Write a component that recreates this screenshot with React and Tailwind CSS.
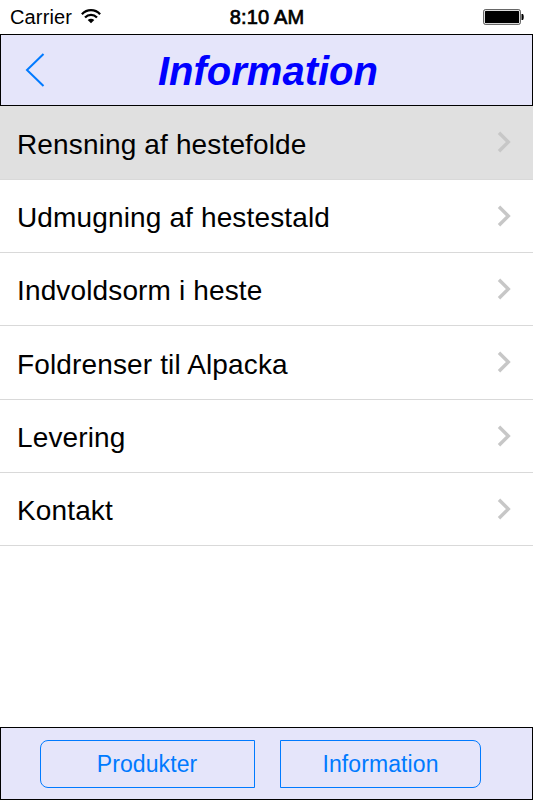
import clsx from 'clsx';

const items = [
  { label: 'Rensning af hestefolde', height: 'h-[74px]', active: true },
  { label: 'Udmugning af hestestald', height: 'h-[73px]' },
  { label: 'Indvoldsorm i heste', height: 'h-[73px]' },
  { label: 'Foldrenser til Alpacka', height: 'h-[74px]' },
  { label: 'Levering', height: 'h-[73px]' },
  { label: 'Kontakt', height: 'h-[73px]' },
];

const StatusBar = () => (
  <div className="h-[34px] shrink-0 grid grid-cols-3 items-center pl-[10px] pr-[9px]">
    <div className="flex items-center gap-[9px]">
      <span className="text-[20px] leading-none tracking-[0.15px]">Carrier</span>
      <svg className="-mt-px" width="20" height="15" viewBox="0 0 20 15" fill="none" stroke="#000" strokeWidth="2.3">
        <path d="M0.9 5.2C6-0.2 14-0.2 19.1 5.2" />
        <path d="M4 8.5C7.5 5 12.5 5 16 8.5" />
        <path d="M10 14.2L6.7 10.9C8.6 9.2 11.4 9.2 13.3 10.9Z" fill="#000" stroke="none" />
      </svg>
    </div>
    <span className="text-center text-[20px] leading-none tracking-[0.15px] [-webkit-text-stroke:0.7px_#000]">8:10 AM</span>
    <svg className="justify-self-end" width="41" height="16" viewBox="0 0 41 16">
      <rect x="0.7" y="0.7" width="36.6" height="14.6" rx="1.5" fill="#fff" stroke="#444" />
      <rect x="2" y="2" width="34" height="12" rx="0.5" />
      <path d="M38.5 5H40C41 6.5 41 9.5 40 11H38.5Z" />
    </svg>
  </div>
);

const Header = () => (
  <header className="h-[72px] shrink-0 grid grid-cols-[80px_1fr_80px] items-center bg-[#e5e5fa] border border-black">
    <button aria-label="Back" className="pl-[24px]">
      <svg width="20" height="34" viewBox="0 0 20 34" fill="none" stroke="#007aff" strokeWidth="2">
        <path d="M18.5 1L2 17L18.5 33" />
      </svg>
    </button>
    <h1 className="text-center text-[40px] leading-none font-bold italic text-[#0000ff] pl-[3px] pt-px">Information</h1>
  </header>
);

const Row = ({ label, height, active }) => (
  <li className={clsx('flex items-center justify-between pl-[17px] pr-[21px] border-b border-[#d9d9d9]', height, active && 'bg-[#e0e0e0]')}>
    <span className="text-[28px] leading-8 pt-[4px] tracking-[0.14px]">{label}</span>
    <svg className="-mt-px" width="15" height="22" viewBox="0 0 15 22" fill="none" stroke="#c7c7c7" strokeWidth="3.4">
      <path d="M2 1.8L11.3 11L2 20.2" />
    </svg>
  </li>
);

const BottomBar = () => (
  <nav className="h-[73px] shrink-0 flex items-center gap-[25px] pl-[39px] bg-[#e5e5fa] border border-black text-[#007aff] text-[23px] tracking-[0.1px]">
    <button className="w-[215px] h-[48px] border border-[#007aff] rounded-l-[8px] pt-[2px] pr-px">Produkter</button>
    <button className="w-[201px] h-[48px] border border-[#007aff] rounded-r-[8px] pt-[2px]">Information</button>
  </nav>
);

const App = () => (
  <div className="w-[533px] h-[800px] flex flex-col overflow-hidden bg-white text-black font-['Liberation_Sans',Arial,sans-serif]">
    <StatusBar />
    <Header />
    <ul className="flex-1">
      {items.map((item) => (
        <Row key={item.label} {...item} />
      ))}
    </ul>
    <BottomBar />
  </div>
);

export default App;
